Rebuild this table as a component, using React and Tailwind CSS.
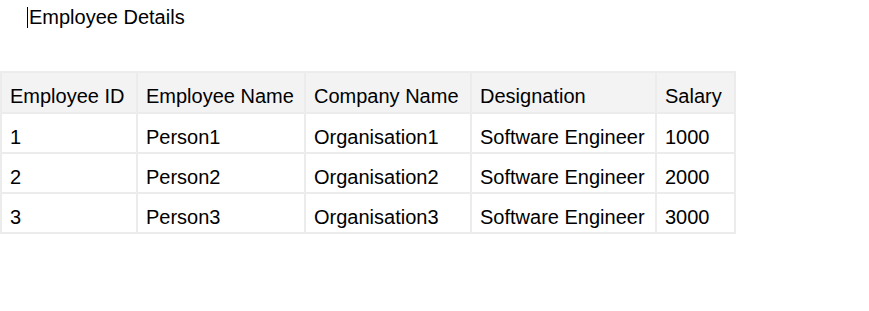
const rows = [
  { id: '1', name: 'Person1', company: 'Organisation1', designation: 'Software Engineer', salary: '1000' },
  { id: '2', name: 'Person2', company: 'Organisation2', designation: 'Software Engineer', salary: '2000' },
  { id: '3', name: 'Person3', company: 'Organisation3', designation: 'Software Engineer', salary: '3000' },
];

const cols = ['w-[136px]', 'w-[168px]', 'w-[166px]', 'w-[185px]', 'w-[79px]'];
const cell = 'border-2 border-[#ececec] px-2 pt-[12px] text-left font-normal align-top';

const App = () => {
  return (
    <div className="w-[869px] h-[311px] bg-white text-black font-['Liberation_Sans',Arial,sans-serif]">
      {/* heading with text caret */}
      <div className="flex items-center pl-[27px] pt-[6px] h-[29px]">
        <span className="w-px h-[21px] bg-black mr-[1px]"></span>
        <span className="text-[20px] leading-[23px]">Employee Details</span>
      </div>

      <table className="mt-[42px] border-collapse table-fixed text-[20px] leading-[23px] w-[734px]">
        <colgroup>
          {cols.map((c, i) => (
            <col key={i} className={c} />
          ))}
        </colgroup>
        <thead>
          <tr className="bg-[#f3f3f3] h-[41px]">
            <th className={cell}>Employee ID</th>
            <th className={cell}>Employee Name</th>
            <th className={cell}>Company Name</th>
            <th className={cell}>Designation</th>
            <th className={cell}>Salary</th>
          </tr>
        </thead>
        <tbody>
          {rows.map((r) => (
            <tr key={r.id} className="h-[40px]">
              <td className={cell}>{r.id}</td>
              <td className={cell}>{r.name}</td>
              <td className={cell}>{r.company}</td>
              <td className={cell}>{r.designation}</td>
              <td className={cell}>{r.salary}</td>
            </tr>
          ))}
        </tbody>
      </table>
    </div>
  );
};

export default App;
